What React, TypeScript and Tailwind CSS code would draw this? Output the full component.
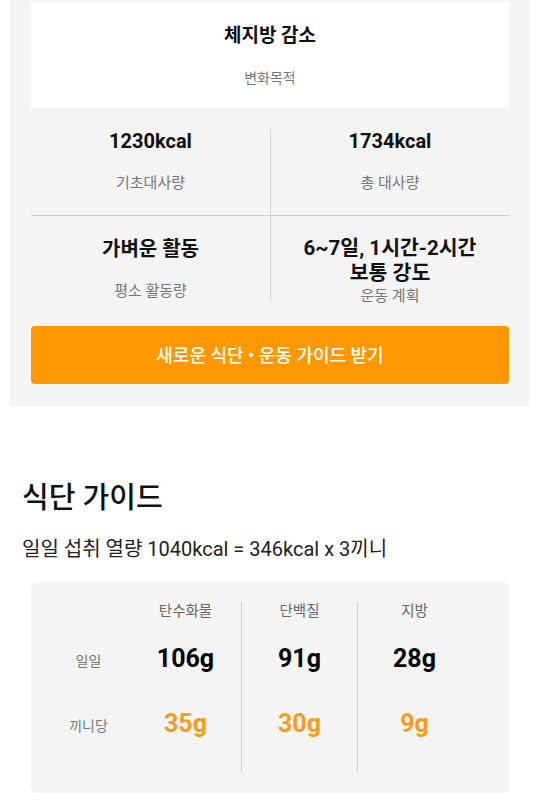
const font = { fontFamily: 'Roboto, "Noto Sans CJK KR", sans-serif' };

const macros = [
  { name: "탄수화물", daily: "106g", meal: "35g", width: "w-[111px]", line: false },
  { name: "단백질", daily: "91g", meal: "30g", width: "w-[116px]", line: true },
  { name: "지방", daily: "28g", meal: "9g", width: "w-[114px]", line: true },
];

function StatCell({
  value,
  label,
  divider,
}: {
  value: string;
  label: string;
  divider?: boolean;
}) {
  return (
    <div
      className={`flex h-[86px] flex-col items-center text-center ${
        divider ? "border-l border-[#d2d2d2]" : ""
      }`}
    >
      <p className="text-[20px] font-bold leading-[24px] text-[#111]">{value}</p>
      <p className="mt-[20px] text-[15px] leading-[20px] text-[#777]">{label}</p>
    </div>
  );
}

export default function App() {
  return (
    <div className="min-h-[804px] w-[540px] bg-white" style={font}>
      {/* summary panel */}
      <div className="mx-[10px] w-[520px] bg-[#f4f4f4] px-[21px] pb-[22px] pt-[2px]">
        <div className="flex h-[106px] flex-col items-center bg-white pt-[22px]">
          <h2 className="text-[19px] font-bold leading-[24px] text-[#111]">체지방 감소</h2>
          <p className="mt-[20px] text-[14px] leading-[20px] text-[#777]">변화목적</p>
        </div>

        <div className="grid grid-cols-2 border-b border-[#cfcfcf] pt-[21px]">
          <StatCell value="1230kcal" label="기초대사량" />
          <StatCell value="1734kcal" label="총 대사량" divider />
        </div>

        <div className="grid h-[85px] grid-cols-2">
          <div className="flex flex-col items-center pt-[21px]">
            <p className="text-[20px] font-bold leading-[24px] text-[#111]">가벼운 활동</p>
            <p className="mt-[20px] text-[15px] leading-[20px] text-[#777]">평소 활동량</p>
          </div>
          <div className="flex h-[85px] flex-col items-center border-l border-[#d2d2d2] pt-[20px] text-center">
            <p className="text-[20.5px] font-bold leading-[25px] text-[#111]">
              6~7일, 1시간-2시간
              <br />
              보통 강도
            </p>
            <p className="text-[15px] leading-[20px] text-[#777]">운동 계획</p>
          </div>
        </div>

        <button
          type="button"
          className="mt-[25px] flex h-[58px] w-full items-center justify-center rounded-[4px] bg-[#ff9800] text-[18px] font-medium text-white"
        >
          새로운 식단 • 운동 가이드 받기
        </button>
      </div>

      {/* diet guide */}
      <div className="px-[22px] pt-[74px]">
        <h1 className="text-[29px] font-medium leading-[36px] text-[#111]">식단 가이드</h1>
        <p className="mt-[20px] text-[20px] leading-[26px] text-[#222]">
          일일 섭취 열량 1040kcal = 346kcal x 3끼니
        </p>
      </div>

      <div className="mx-[31px] mt-[20px] flex rounded-[6px] bg-[#f4f4f4] pb-[21px] pl-[16px] pt-[20px]">
        <div className="flex w-[83px] flex-col items-center">
          <div className="h-[20px]" />
          <div className="mt-[22px] flex h-[30px] items-center pt-[4px] text-[14px] text-[#777]">일일</div>
          <div className="mt-[35px] flex h-[30px] items-center pt-[4px] text-[14px] text-[#777]">끼니당</div>
        </div>
        {macros.map((m) => (
          <div
            key={m.name}
            className={`${m.width} flex h-[170px] flex-col items-center ${
              m.line ? "border-l border-[#cccccc]" : ""
            }`}
          >
            <p className="h-[20px] text-[14.5px] leading-[20px] text-[#666]">{m.name}</p>
            <p className="mt-[22px] text-[25px] font-bold leading-[30px] text-black">{m.daily}</p>
            <p className="mt-[35px] text-[25px] font-bold leading-[30px] text-[#f99c1b]">{m.meal}</p>
          </div>
        ))}
      </div>
    </div>
  );
}
